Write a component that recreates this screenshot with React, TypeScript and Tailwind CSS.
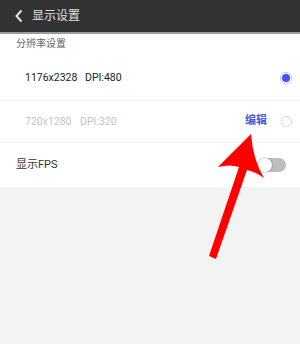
import React from 'react'

function Radio({ checked }: { checked: boolean }) {
  return checked ? (
    <div className="w-[12px] h-[12px] rounded-full border border-[#b9c3fb] flex items-center justify-center">
      <div className="w-[8px] h-[8px] rounded-full bg-[#3f55f0]" />
    </div>
  ) : (
    <div className="w-[11px] h-[11px] rounded-full border border-[#d6d6d6] bg-white" />
  )
}

export default function App() {
  return (
    <div className="relative w-[300px] h-[344px] bg-[#f3f3f3] overflow-hidden font-['Roboto','Noto_Sans_CJK_SC',sans-serif]">
      <div className="h-[32px] bg-[#333333] flex items-center pl-[14px]">
        <svg width="10" height="14" viewBox="0 0 10 14" className="mr-[8px]">
          <path d="M7.5 1.5 L2.5 7 L7.5 12.5" fill="none" stroke="#e6e6e6" strokeWidth="2" />
        </svg>
        <span className="text-[12px] text-[#e0e0e0]">显示设置</span>
      </div>
      <div className="h-[2px] bg-[#9c9c9c]" />
      <div className="bg-white">
        <div className="h-[22px] pl-[16px] pt-[4px] text-[10px] leading-[12px] text-[#666]">分辨率设置</div>
        <div className="h-[45px] flex items-center pl-[25px] pr-[8px] border-b border-[#f2f2f2]">
          <span className="text-[10.5px] text-[#222] w-[60px]">1176x2328</span>
          <span className="text-[10.5px] text-[#222]">DPI:480</span>
          <div className="ml-auto"><Radio checked /></div>
        </div>
        <div className="h-[42px] flex items-center pl-[25px] pr-[8px] border-b border-[#f2f2f2]">
          <span className="text-[10.5px] text-[#c2c2c2] w-[55px]">720x1280</span>
          <span className="text-[10.5px] text-[#c2c2c2]">DPI:320</span>
          <span className="ml-auto mr-[14px] text-[11px] font-bold text-[#4a57d6]">编辑</span>
          <Radio checked={false} />
        </div>
        <div className="h-[44px] flex items-center pl-[16px] pr-[14px]">
          <span className="text-[11px] text-[#333]">显示FPS</span>
          <div className="ml-auto w-[28px] h-[14px] rounded-full bg-[#bdbdbd] relative">
            <div className="absolute left-0 top-0 w-[14px] h-[14px] rounded-full bg-white shadow-[0_0_2px_rgba(0,0,0,0.4)]" />
          </div>
        </div>
      </div>
      <svg className="absolute left-0 top-0" width="300" height="344" viewBox="0 0 300 344">
        <path
          d="M251 134 Q236 149 218 167 Q230 164 239 167 L209 256 L216 259 L247 170 Q256 172 264 178 Q253 160 251 134 Z"
          fill="#ff0000"
        />
      </svg>
    </div>
  )
}
